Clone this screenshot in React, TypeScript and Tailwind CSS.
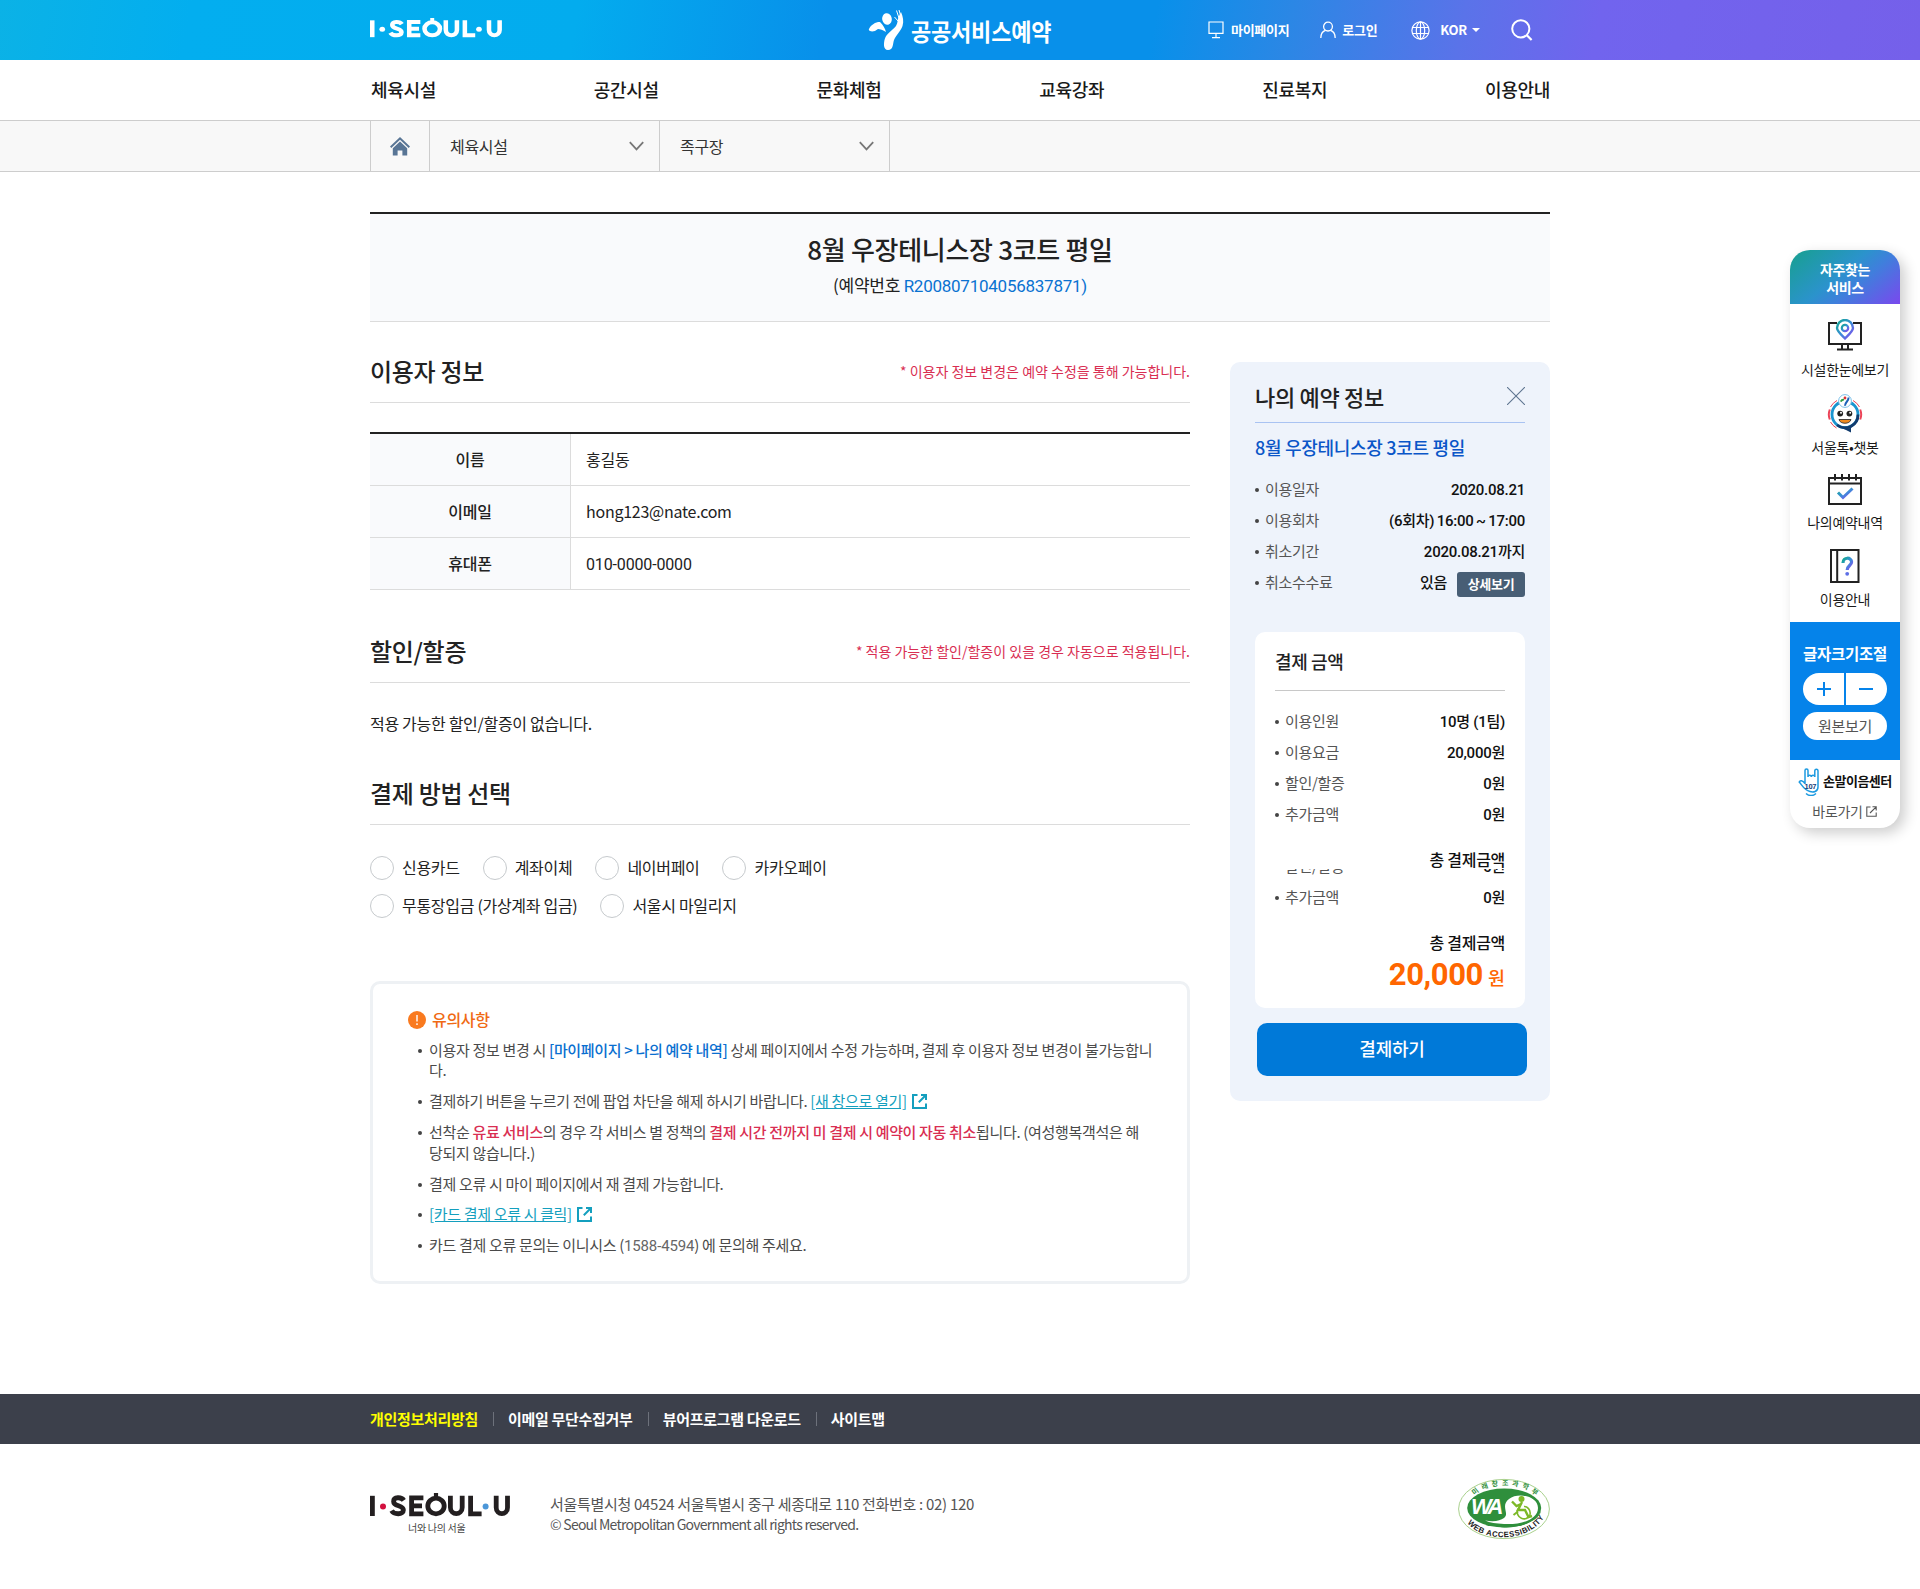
import React from "react";

const cls = (...a: (string | false | undefined)[]) => a.filter(Boolean).join(" ");

function Figure() {
  return (
    <svg width="38" height="42" viewBox="0 0 38 42" fill="#fff">
      <ellipse cx="19" cy="10" rx="4.8" ry="5.8" transform="rotate(-12 19 10)" />
      <path d="M1 20 C3 15.5 8 12.8 12 13 C15 16 17 19 18 23 C15 21 12 20 10 20 C7 22.5 4 23 2 22 C0.8 21.4 .6 20.8 1 20 Z" />
      <path d="M33 3 C35 8 36 12 34.5 17 C33 22 28 26 26 31 C24.7 35 25.4 41 20 41 C15 41 15.6 34 16.8 30 C18.5 24.5 24 22 28 17 C30 13.5 29.6 10 30.5 8 Z" />
      <path d="M28.5 1.5 L31 9 M31 1 L33 8 M26.5 8 L30 12" stroke="#fff" strokeWidth="1" />
    </svg>
  );
}

function SeoulLogo({ color, dot1, dot2, w, h }: { color: string; dot1: string; dot2: string; w: number; h: number }) {
  return (
    <svg width={w} height={h} viewBox="0 0 140 24" preserveAspectRatio="none" fill="none" stroke={color} strokeWidth="4.8">
      <path d="M2.4 2.8 V23" />
      <circle cx="13" cy="13.4" r="3" fill={dot1} stroke="none" />
      <path d="M33.8 7.4 C31.5 3.8 23.6 3.6 23.6 8.4 C23.6 14 33.4 11.4 33.4 17 C33.4 22 24 21.8 21.6 17.6" />
      <path d="M53.4 4.9 H41.6 V20.8 H53.4 M41.6 12.9 H52" />
      <ellipse cx="66" cy="13" rx="8.2" ry="7.8" />
      <path d="M66 0 V5" strokeWidth="4.2" />
      <path d="M80.4 2.8 V14.5 C80.4 22.7 92.2 22.7 92.2 14.5 V2.8" />
      <path d="M100.6 2.8 V20.8 H111.6" />
      <circle cx="115.6" cy="13.4" r="3" fill={dot2} stroke="none" />
      <path d="M126.2 2.8 V14.5 C126.2 22.7 137.5 22.7 137.5 14.5 V2.8" />
    </svg>
  );
}

function Header() {
  return (
    <header>
      <div className="h-[60px] bg-[linear-gradient(100deg,#0bb2e6_0%,#03aeef_10%,#03acee_30%,#0890ea_43%,#0890ea_60%,#2b87e5_67%,#5a73e9_76%,#7164ee_83%,#7560ea_100%)]">
        <div className="mx-auto flex h-full w-[1180px] items-center">
          <div className="w-[498px]">
            <div className="-mt-[4px]"><SeoulLogo color="#fff" dot1="#fff" dot2="#fff" w={132} h={20} /></div>
          </div>
          <div className="flex w-[340px] items-center gap-[5px]">
            <Figure />
            <span className="origin-center scale-y-110 text-[22px] leading-none font-bold tracking-[-0.2px] text-white">공공서비스예약</span>
          </div>
          <div className="flex items-center text-[13px] font-bold tracking-[-0.3px] text-white">
            <svg width="16" height="18" viewBox="0 0 16 18" fill="none" stroke="#fff" strokeWidth="1.2">
              <path d="M1 1 H15 V12.3 H1 Z M8 12.3 V16.4 M4 16.6 H12" />
            </svg>
            <span className="ml-[7px]">마이페이지</span>
            <svg className="ml-[31px]" width="16" height="18" viewBox="0 0 16 18" fill="none" stroke="#fff" strokeWidth="1.3">
              <circle cx="8" cy="5.6" r="4.4" />
              <path d="M.8 17 C.8 12 3 10.2 5.6 9.4 M15.2 17 C15.2 12 13 10.2 10.4 9.4" />
            </svg>
            <span className="ml-[6px]">로그인</span>
            <svg className="ml-[34px]" width="19" height="19" viewBox="0 0 19 19" fill="none" stroke="#fff" strokeWidth="1.2">
              <circle cx="9.5" cy="9.5" r="8.6" />
              <ellipse cx="9.5" cy="9.5" rx="4.2" ry="8.6" />
              <path d="M9.5 1 V18 M1.8 6.5 H17.2 M1.8 12.5 H17.2" />
            </svg>
            <span className="ml-[10px]">KOR</span>
            <svg className="ml-[5px]" width="8" height="4" viewBox="0 0 8 4" fill="#fff"><path d="M0 0 H8 L4 4 Z" /></svg>
            <svg className="ml-[31px]" width="22" height="22" viewBox="0 0 22 22" fill="none" stroke="#fff" strokeWidth="2">
              <circle cx="9.8" cy="9.8" r="8.6" />
              <path d="M15.6 16 L20.6 21" strokeWidth="2.2" />
            </svg>
          </div>
        </div>
      </div>
      <nav className="h-[60px] bg-white">
        <ul className="mx-auto flex h-full w-[1180px] items-center justify-between pb-[2px] pl-px text-[18px] font-medium tracking-[-0.3px] text-[#1a1a1a]">
          {["체육시설", "공간시설", "문화체험", "교육강좌", "진료복지", "이용안내"].map((t) => <li key={t}>{t}</li>)}
        </ul>
      </nav>
      <div className="h-[52px] border-y border-[#cdcdcd] bg-[#f8f8f8]">
        <div className="mx-auto flex h-full w-[1180px]">
          <div className="flex w-[59px] items-center justify-center border-l border-[#cdcdcd]">
            <svg width="20" height="19" viewBox="0 0 20 19" fill="#587595">
              <path d="M10 0 L20 9.6 L18.7 11 L10 2.8 L1.3 11 L0 9.6 Z" />
              <path d="M10 4.4 L17.2 11.2 V18.6 H12.4 V13.6 H7.6 V18.6 H2.8 V11.2 Z" />
            </svg>
          </div>
          {["체육시설", "족구장"].map((t, i) => (
            <div key={t} className={cls("flex items-center justify-between border-l border-[#cdcdcd] pr-[15px] pl-[20px] text-[16px] tracking-[-0.3px] text-[#333]", i === 0 ? "w-[230px]" : "w-[231px] border-r")}>
              {t}
              <svg width="15" height="10" viewBox="0 0 15 10" fill="none" stroke="#777" strokeWidth="1.8"><path d="M.8 1.2 L7.5 8.4 L14.2 1.2" /></svg>
            </div>
          ))}
        </div>
      </div>
    </header>
  );
}

function SectionHead({ title, note }: { title: string; note?: string }) {
  return (
    <div className="flex h-[61px] items-center justify-between border-b border-[#dcdcdc] pb-[2px]">
      <h2 className="text-[24px] font-medium tracking-[-0.3px] text-[#222]">{title}</h2>
      {note && <p className="text-[14px] tracking-normal text-[#d92e52]">{note}</p>}
    </div>
  );
}

function Radio({ label }: { label: string }) {
  return (
    <label className="mr-[23px] flex text-[16px] leading-[22px] tracking-[-0.3px] text-[#222]">
      <span className="mr-[8px] h-[24px] w-[24px] rounded-full border border-[#c6cacd] bg-white" />
      {label}
    </label>
  );
}

function ExtIcon() {
  return (
    <svg className="mb-[3px] ml-[5px] inline-block" width="15" height="15" viewBox="0 0 15 15" fill="none" stroke="#149fbe" strokeWidth="2">
      <path d="M5.5 1 H1 V14 H14 V9.5" />
      <path d="M9 1 H14 V6 M14 1 L6.8 8.2" />
    </svg>
  );
}

function Note({ children }: { children: React.ReactNode }) {
  return (
    <li className="mb-[10px] flex">
      <span className="mt-[9px] mr-[7px] h-[4px] w-[4px] shrink-0 rounded-full bg-[#444]" />
      <div className="break-all">{children}</div>
    </li>
  );
}

function Row({ label, children }: { label: string; children: React.ReactNode }) {
  return (
    <div className="flex h-[31px] items-center justify-between text-[15px] tracking-[-0.3px]">
      <span className="flex items-center text-[#555]">
        <span className="mr-[6px] h-[4px] w-[4px] rounded-full bg-[#444]" />
        {label}
      </span>
      <span className="flex items-center pt-[2px] font-[Roboto,'Noto_Sans_CJK_KR',sans-serif] font-medium tracking-[-0.25px] text-[#111]">{children}</span>
    </div>
  );
}

function Panel() {
  return (
    <aside className="mt-[40px] h-[739px] w-[320px] rounded-[10px] bg-[#eef3fb] px-[25px]">
      <div className="flex h-[61px] items-center justify-between border-b border-[#a9c3f2] pt-[7px]">
        <h3 className="pt-px text-[22px] font-medium tracking-[-0.3px] text-[#222]">나의 예약 정보</h3>
        <svg width="18" height="18" viewBox="0 0 18 18" stroke="#5e7590" strokeWidth="1.1"><path d="M0 0 L18 18 M18 0 L0 18" /></svg>
      </div>
      <h4 className="mt-[11px] h-[40px] text-[18px] leading-[26px] font-medium tracking-[-0.3px] text-[#0a56c8]">8월 우장테니스장 3코트 평일</h4>
      <Row label="이용일자">2020.08.21</Row>
      <Row label="이용회차"><span className="[word-spacing:-1px]">(6회차) 16:00 ~ 17:00</span></Row>
      <Row label="취소기간">2020.08.21까지</Row>
      <Row label="취소수수료">
        있음
        <button className="mt-[2px] ml-[10px] h-[25px] w-[68px] rounded-[3px] bg-[#485e75] pb-[1px] text-[13px] leading-none font-bold tracking-[-0.3px] text-white">상세보기</button>
      </Row>
      <div className="mt-[34px] h-[376px] rounded-[10px] bg-white px-[20px]">
        <div className="h-[237px] overflow-hidden">
          <h4 className="h-[59px] border-b border-[#c8c8c8] pt-[16px] text-[18px] leading-[26px] font-medium tracking-[-0.4px] text-[#222]">결제 금액</h4>
          <div className="mt-[15px]">
            <Row label="이용인원">10명 (1팀)</Row>
            <Row label="이용요금">20,000원</Row>
            <Row label="할인/할증">0원</Row>
            <Row label="추가금액">0원</Row>
          </div>
          <p className="mt-[17px] text-right text-[16px] leading-[24px] font-medium tracking-[-0.3px] text-[#111]">총 결제금액</p>
        </div>
        <div className="flex h-[139px] flex-col overflow-hidden">
          <div className="-mt-[18px]">
            <Row label="할인/할증">0원</Row>
            <Row label="추가금액">0원</Row>
          </div>
          <p className="mt-[17px] text-right text-[16px] leading-[24px] font-medium tracking-[-0.3px] text-[#111]">총 결제금액</p>
          <p className="mt-[1px] flex items-baseline justify-end gap-[5px] font-[Roboto,'Noto_Sans_CJK_KR',sans-serif] text-[#ff6600]">
            <span className="text-[31px] leading-[40px] font-bold tracking-[-0.4px]">20,000</span>
            <span className="text-[18.5px] leading-[24px] font-medium">원</span>
          </p>
        </div>
      </div>
      <button className="mt-[15px] ml-[2px] h-[53px] w-[270px] rounded-[10px] bg-[#0079d8] pb-[2px] text-[18px] font-medium tracking-[-0.2px] text-white">결제하기</button>
    </aside>
  );
}

function WaMark() {
  return (
    <svg width="92" height="62" viewBox="0 0 92 62">
      <defs>
        <path id="wa-top" d="M16.5 17.5 C28 4.5 64 4 77.5 17.5" />
        <path id="wa-bot" d="M9 44 C22 63.5 68 66 85 41" />
      </defs>
      <ellipse cx="46" cy="31" rx="45.4" ry="29.6" fill="#fff" stroke="#a9d18d" strokeWidth="1" />
      <ellipse cx="46.2" cy="30" rx="37" ry="19.6" fill="#2f8f3c" />
      <path d="M46 40 C52 36 42 28 51 21 C60 14 80 18 80 30 C80 42 62 47 46 46 C38 45.6 32 44.6 27 42.5 C36 44 42 43 46 40 Z" fill="#fff" />
      <text x="13" y="36" fontFamily="Liberation Sans" fontWeight="700" fontStyle="italic" fontSize="22" letterSpacing="-3" fill="#fff">WA</text>
      <g fill="none" stroke="#7db928" strokeWidth="2.4">
        <circle cx="63.5" cy="21" r="3" fill="#7db928" stroke="none" />
        <path d="M64 24 L60 32 H67 L70.5 39 L74 38 M63 26 L58.5 28 L54 23.5" />
        <path d="M60 30.5 C56 40 69 45 72 36.5 C73 32 69 28 66 28.5" strokeWidth="1.6" />
        <path d="M60 33.5 L55.5 37" strokeWidth="2" />
      </g>
      <path d="M27 43.5 C42 52 76 48 83 33 C80 47 44 56 27 43.5 Z" fill="#2f8f3c" />
      <text fontFamily="Noto Sans CJK KR" fontWeight="700" fontSize="7" fill="#2f8f3c"><textPath href="#wa-top" startOffset="0" textLength="66">미래창조과학부</textPath></text>
      <text fontFamily="Liberation Sans" fontWeight="700" fontSize="7.8" fill="#222"><textPath href="#wa-bot" startOffset="1" textLength="87">WEB ACCESSIBILITY</textPath></text>
    </svg>
  );
}

function GradDef({ id }: { id: string }) {
  return (
    <defs>
      <linearGradient id={id} x1="0" y1="0" x2="1" y2="1">
        <stop offset="0" stopColor="#12a890" /><stop offset=".5" stopColor="#3a8fd8" /><stop offset="1" stopColor="#8a45f0" />
      </linearGradient>
    </defs>
  );
}

function Quick() {
  const label = "text-center text-[14px] leading-[20px] tracking-[-0.3px] text-[#1a1a1a]";
  return (
    <aside className="absolute top-[250px] right-[20px] h-[578px] w-[110px] overflow-hidden rounded-[20px] bg-white shadow-[5px_5px_14px_rgba(0,0,0,0.2)]">
      <div className="flex h-[54px] items-center justify-center bg-[linear-gradient(140deg,#17a08e_0%,#2b93cc_45%,#3f7fdc_62%,#7a48ee_100%)] pt-px text-center text-[14px] leading-[18px] font-bold tracking-[-0.4px] text-white">
        자주찾는<br />서비스
      </div>
      <div className="flex flex-col items-center">
        <svg className="mt-[15px]" width="34" height="32" viewBox="0 0 34 32" fill="none">
          <GradDef id="g1" />
          <path d="M9 4 H1 V25 H33 V4 H25 M14 25 V30 M20 25 V30 M9 30.5 H25" stroke="#222" strokeWidth="2" />
          <path d="M17 19.5 C12 14.5 9 12 9 9 A8 8 0 0 1 25 9 C25 12 22 14.5 17 19.5 Z" stroke="url(#g1)" strokeWidth="2.4" />
          <circle cx="17" cy="9" r="3.2" stroke="url(#g1)" strokeWidth="2.2" />
        </svg>
        <p className={cls(label, "mt-[8px]")}>시설한눈에보기</p>
        <svg className="mt-[15px]" width="36" height="39" viewBox="0 0 36 39">
          <path d="M2.8 15.5 Q.8 20.5 2.8 25.5 M33.2 15.5 Q35.2 20.5 33.2 25.5" stroke="#ec4458" strokeWidth="2" fill="none" />
          <path d="M3.5 13 A16 16 0 0 1 10 6.5 M32.5 13 A16 16 0 0 0 26 6.5 M3.5 28 A16 16 0 0 0 9.5 34" stroke="#ec4458" strokeWidth="1" fill="none" />
          <path d="M24 32 L24 38.5 L13 33 Z" fill="#123c6e" />
          <circle cx="18" cy="20.5" r="13" fill="#fff" stroke="#1b94cf" strokeWidth="2.8" />
          <path d="M31 20.5 A13 13 0 0 1 10 31" stroke="#123c6e" strokeWidth="2.8" fill="none" />
          <circle cx="18" cy="7" r="6.4" fill="#fff" stroke="#7cc0e8" strokeWidth="1" />
          <path d="M13.8 7.6 Q15 5.2 17 5.8" stroke="#2f9e44" strokeWidth="2" fill="none" /><circle cx="18" cy="4" r="1.4" fill="#d33" />
          <path d="M21.6 3.6 C21.6 7.5 18 8 18 11.8" stroke="#1c62b8" strokeWidth="2" fill="none" />
          <circle cx="13.2" cy="19.6" r="2.9" fill="#222" /><circle cx="22.4" cy="19.6" r="2.9" fill="#222" />
          <circle cx="14" cy="18.8" r="1" fill="#fff" /><circle cx="23.2" cy="18.8" r="1" fill="#fff" />
          <path d="M12 25.5 H24 C23 30.5 13 30.5 12 25.5 Z" fill="#f08a1d" stroke="#333" strokeWidth=".9" />
        </svg>
        <p className={cls(label, "mt-[4px]")}>서울톡•챗봇</p>
        <svg className="mt-[17px]" width="34" height="31" viewBox="0 0 34 31" fill="none">
          <GradDef id="g3" />
          <path d="M1 4 H33 V30 H1 Z M1 9.5 H33 M7 0 V6.5 M14 0 V6.5 M21 0 V6.5 M28 0 V6.5" stroke="#222" strokeWidth="2" />
          <path d="M10 18.5 L15 23.5 L24.5 14.5" stroke="url(#g3)" strokeWidth="3" />
        </svg>
        <p className={cls(label, "mt-[7px]")}>나의예약내역</p>
        <svg className="mt-[17px]" width="30" height="34" viewBox="0 0 30 34" fill="none">
          <GradDef id="g4" />
          <path d="M1 1 H28.5 V33 H1 Z M7.2 1 V33" stroke="#222" strokeWidth="2" />
          <path d="M13 14 C13 7.6 21.6 8 21.6 13 C21.6 16.6 17.2 16.6 17.2 21" stroke="url(#g4)" strokeWidth="3.2" />
          <circle cx="17.2" cy="24.8" r="1.9" fill="#5d6fe6" />
        </svg>
        <p className={cls(label, "mt-[6px]")}>이용안내</p>
      </div>
      <div className="mt-[13px] flex h-[138px] flex-col items-center bg-[#0583ea] pt-[19px]">
        <p className="text-[15.5px] leading-[24px] font-bold tracking-[-0.3px] whitespace-nowrap text-white">글자크기조절</p>
        <div className="mt-[8px] flex gap-[2px]">
          <button className="flex h-[32px] w-[41px] items-center justify-center rounded-l-full bg-white">
            <svg width="14" height="14" viewBox="0 0 14 14" stroke="#0583ea" strokeWidth="2"><path d="M7 0 V14 M0 7 H14" /></svg>
          </button>
          <button className="flex h-[32px] w-[41px] items-center justify-center rounded-r-full bg-white pr-[2px]">
            <svg width="14" height="14" viewBox="0 0 14 14" stroke="#0583ea" strokeWidth="2"><path d="M0 7 H14" /></svg>
          </button>
        </div>
        <button className="mt-[7px] h-[28px] w-[84px] rounded-full bg-white pb-[2px] text-[15px] leading-none tracking-[-0.3px] text-[#555]">원본보기</button>
      </div>
      <div className="flex items-center pt-[8px] pl-[8px]">
        <svg width="22" height="28" viewBox="0 0 22 28" fill="none" stroke="#1c9ae0" strokeWidth="1.5">
          <path d="M7 16 V2.5 C7 .5 10 .5 10 2.5 V9 M10 9 C10 6.5 13.3 6.5 13.3 9 M13.3 9 C13.3 6.5 16.8 6.5 16.8 9 M16.8 9 V3 C16.8 .5 20 .5 20 3 V19 C20 24 15 24.5 12 23.5 C6 22 4 17 1.2 14 C2 12 4.5 12 7 15.5" />
          <path d="M8 25.5 C11 28 15 28 18 25.5" />
          <text x="6.6" y="20.6" fontFamily="Liberation Sans" fontWeight="700" fontSize="7.5" fill="#14407c" stroke="none" letterSpacing="-.3">107</text>
        </svg>
        <span className="ml-[3px] pb-[2px] text-[13px] leading-[26px] font-bold tracking-[-0.5px] whitespace-nowrap text-[#111]">손말이음센터</span>
      </div>
      <p className="mt-[4px] flex items-center justify-center gap-[3px] pr-px text-[14px] leading-[22px] tracking-[-0.3px] text-[#555]">
        바로가기
        <svg width="11" height="11" viewBox="0 0 11 11" fill="none" stroke="#555" strokeWidth="1.1"><path d="M4.5 1 H.8 V10.3 H10.2 V6.5 M6.5 .8 H10.2 V4.5 M10.2 .8 L4 7" /></svg>
      </p>
    </aside>
  );
}

export default function App() {
  return (
    <div className="relative h-[1589px] w-[1920px] overflow-hidden bg-white font-['Noto_Sans_CJK_KR',sans-serif] text-[#222]">
      <Header />
      <main className="mx-auto mt-[40px] h-[1182px] w-[1180px]">
        <div className="h-[110px] border-t-2 border-b border-t-[#222] border-b-[#dcdcdc] bg-[#f9fafc] pt-[17px] text-center">
          <h1 className="text-[26px] leading-[36px] font-medium tracking-[-0.3px]">8월 우장테니스장 3코트 평일</h1>
          <p className="mt-px text-[17px] leading-[34px] tracking-[-0.25px]">
            (예약번호 <span className="font-[Roboto] text-[#0a72d1]">R200807104056837871)</span>
          </p>
        </div>
        <div className="flex justify-between">
          <div className="w-[820px]">
            <div className="mt-[20px]"><SectionHead title="이용자 정보" note="* 이용자 정보 변경은 예약 수정을 통해 가능합니다." /></div>
            <div className="mt-[29px] border-t-2 border-[#222] text-[16px] tracking-[-0.3px]">
              {[["이름", "홍길동"], ["이메일", "hong123@nate.com"], ["휴대폰", "010-0000-0000"]].map(([k, v], i) => (
                <div key={k} className="flex h-[52px] border-b border-[#dcdcdc]">
                  <div className="flex w-[201px] items-center justify-center border-r border-[#dcdcdc] bg-[#f9fafc] pb-[2px] font-medium">{k}</div>
                  <div className={cls("flex items-center pl-[15px]", i === 2 ? "pt-[2px] font-[Roboto] tracking-[-0.15px]" : "pb-[2px] tracking-[-0.25px]")}>{v}</div>
                </div>
              ))}
            </div>
            <div className="mt-[32px]"><SectionHead title="할인/할증" note="* 적용 가능한 할인/할증이 있을 경우 자동으로 적용됩니다." /></div>
            <p className="mt-[28px] text-[16px] leading-[24px] tracking-[-0.3px]">적용 가능한 할인/할증이 없습니다.</p>
            <div className="mt-[29px]"><SectionHead title="결제 방법 선택" /></div>
            <div className="mt-[31px] flex"><Radio label="신용카드" /><Radio label="계좌이체" /><Radio label="네이버페이" /><Radio label="카카오페이" /></div>
            <div className="mt-[14px] flex"><Radio label="무통장입금 (가상계좌 입금)" /><Radio label="서울시 마일리지" /></div>
            <div className="mt-[63px] h-[303px] rounded-[10px] border-[3px] border-[#eef1f4] pt-[24px] pr-[30px] pl-[35px]">
              <h5 className="flex h-[24px] text-[16px] leading-[22px] font-medium tracking-[-0.3px] text-[#f06a14]">
                <svg className="mt-[3px] mr-[6px]" width="18" height="18" viewBox="0 0 18 18"><circle cx="9" cy="9" r="9" fill="#f97a1f" /><path d="M9 4 V10.6 M9 12.2 V14" stroke="#fff" strokeWidth="1.4" /></svg>
                유의사항
              </h5>
              <ul className="mt-[7.5px] ml-[10px] text-[15px] leading-[20.8px] tracking-[-0.33px] text-[#4a4a4a]">
                <Note>이용자 정보 변경 시 <b className="font-medium text-[#0a6fd0]">[마이페이지 &gt; 나의 예약 내역]</b> 상세 페이지에서 수정 가능하며, 결제 후 이용자 정보 변경이 불가능합니다.</Note>
                <Note>결제하기 버튼을 누르기 전에 팝업 차단을 해제 하시기 바랍니다. <a className="text-[#149fbe] underline">[새 창으로 열기]</a><ExtIcon /></Note>
                <Note>선착순 <b className="font-medium text-[#d92e52]">유료 서비스</b>의 경우 각 서비스 별 정책의 <b className="font-medium text-[#d92e52]">결제 시간 전까지 미 결제 시 예약이 자동 취소</b>됩니다. (여성행복객석은 해<br />당되지 않습니다.)</Note>
                <Note>결제 오류 시 마이 페이지에서 재 결제 가능합니다.</Note>
                <Note><a className="text-[#149fbe] underline">[카드 결제 오류 시 클릭]</a><ExtIcon /></Note>
                <Note>카드 결제 오류 문의는 이니시스 (<span className="font-[Roboto] tracking-[-0.15px] text-[#666]">1588-4594</span>) 에 문의해 주세요.</Note>
              </ul>
            </div>
          </div>
          <Panel />
        </div>
      </main>
      <footer>
        <div className="h-[50px] bg-[#3c404b]">
          <div className="mx-auto flex h-full w-[1180px] items-center text-[15px] font-bold tracking-[-0.3px] text-white">
            {["개인정보처리방침", "이메일 무단수집거부", "뷰어프로그램 다운로드", "사이트맵"].map((t, i) => (
              <React.Fragment key={t}>
                {i > 0 && <span className="mr-[14px] ml-[15px] h-[14px] w-px bg-[#6d717b]" />}
                <span className={i === 0 ? "text-[#ffff00]" : "text-white"}>{t}</span>
              </React.Fragment>
            ))}
          </div>
        </div>
        <div className="mx-auto flex w-[1180px] pt-[34px]">
          <div className="w-[180px] pt-[15px]">
            <SeoulLogo color="#231f20" dot1="#d3103f" dot2="#4c97d8" w={140} h={24} />
            <p className="mt-[4px] ml-[38px] text-[10px] leading-[14px] tracking-[-0.3px] text-[#444]">너와 나의 서울</p>
          </div>
          <div className="flex-1 pt-[16px] text-[14px] leading-[20px] text-[#555]">
            <p className="text-[15px] tracking-[-0.3px]">서울특별시청 04524 서울특별시 중구 세종대로 110 전화번호 : 02) 120</p>
            <p className="tracking-[-0.75px]">© Seoul Metropolitan Government all rights reserved.</p>
          </div>
          <WaMark />
        </div>
      </footer>
      <Quick />
    </div>
  );
}
